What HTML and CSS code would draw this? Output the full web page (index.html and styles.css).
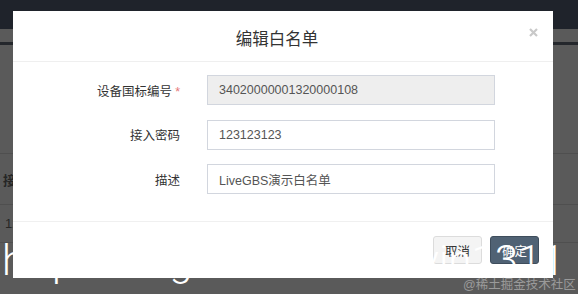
FILE: index.html
```html
<!DOCTYPE html>
<html lang="zh">
<head>
<meta charset="utf-8">
<title>编辑白名单</title>
<link rel="stylesheet" href="styles.css">
</head>
<body>
<div class="page">
  <div class="topbar"></div>
  <div class="subbar"></div>
  <div class="subline"></div>
  <div class="spacer"></div>
  <div class="trow thead"><span>接入密码</span></div>
  <div class="trow tdata"><span>123123123</span></div>
</div>

<div class="modal">
  <div class="modal-header">
    <h4 class="modal-title">编辑白名单</h4>
    <span class="close"><svg width="9" height="9" viewBox="0 0 9 9"><path d="M1 1 L8 8 M8 1 L1 8" stroke="#c9c9c9" stroke-width="2.2" stroke-linecap="butt"/></svg></span>
  </div>
  <div class="modal-body">
    <div class="form-row">
      <label class="form-label">设备国标编号<span class="req">*</span></label>
      <div class="form-input disabled">34020000001320000108</div>
    </div>
    <div class="form-row">
      <label class="form-label">接入密码</label>
      <div class="form-input">123123123</div>
    </div>
    <div class="form-row last">
      <label class="form-label">描述</label>
      <div class="form-input">LiveGBS演示白名单</div>
    </div>
  </div>
  <div class="modal-footer">
    <button class="btn btn-default">取消</button>
    <button class="btn btn-primary">确定</button>
  </div>
</div>

<div class="wm-big">http://blog.csdn.net/kevin1311</div>
<div class="wm-small">@稀土掘金技术社区</div>
</body>
</html>
```
FILE: styles.css
```css
html, body {
  margin: 0;
  padding: 0;
}
body {
  width: 578px;
  height: 294px;
  overflow: hidden;
  background: #5a5a5a;
  font-family: "Liberation Sans", "Noto Sans CJK SC", sans-serif;
  position: relative;
}
.page {
  display: flex;
  flex-direction: column;
}
.topbar {
  height: 29px;
  background: #1f232b;
}
.subbar {
  height: 13px;
  background: #5a5a5a;
}
.subline {
  height: 3px;
  background: #24272c;
}
.spacer {
  height: 108px;
}
.trow {
  display: flex;
  align-items: center;
  border-top: 1px solid #4f4f4f;
  padding-left: 3px;
  color: #262626;
  font-size: 13px;
}
.thead {
  height: 50px;
  font-weight: bold;
}
.tdata {
  height: 37px;
  border-bottom: 1px solid #4f4f4f;
  padding-left: 5px;
}

.modal {
  position: absolute;
  left: 13px;
  top: 11px;
  width: 540px;
  height: 267px;
  background: #fff;
  display: flex;
  flex-direction: column;
}
.modal-header {
  height: 50px;
  border-bottom: 1px solid #efefef;
  display: flex;
  align-items: center;
  justify-content: center;
  position: relative;
}
.modal-title {
  margin: 0;
  font-weight: normal;
  font-size: 16.5px;
  color: #333;
  padding-top: 3px;
  margin-right: 12px;
}
.close {
  position: absolute;
  right: 15px;
  top: 17px;
  width: 9px;
  height: 9px;
  display: flex;
}
.modal-body {
  padding: 13px 0 27px 0;
  display: flex;
  flex-direction: column;
  gap: 14.5px;
}
.form-row {
  display: grid;
  grid-template-columns: 167px 288px;
  column-gap: 27px;
  align-items: center;
}
.form-label {
  text-align: right;
  font-size: 12.5px;
  color: #333;
}
.req {
  color: #e5777a;
  margin-left: 3px;
}
.form-input {
  height: 30px;
  box-sizing: border-box;
  border: 1px solid #d2d6de;
  padding: 0 11px;
  display: flex;
  align-items: center;
  font-size: 12.5px;
  color: #555;
}
.form-input.disabled {
  background: #eee;
}
.modal-footer {
  border-top: 1px solid #f0f0f0;
  flex: 1;
  display: flex;
  justify-content: flex-end;
  align-items: flex-start;
  gap: 8px;
  padding: 14px 14px 0 0;
}
.btn {
  height: 28px;
  box-sizing: border-box;
  border-radius: 3px;
  font-family: inherit;
  font-size: 12.5px;
  padding: 0 11px;
  margin: 0;
}
.btn-default {
  background: #f4f4f4;
  border: 1px solid #dcdcdc;
  color: #333;
}
.btn-primary {
  background: #506274;
  border: 1px solid #3e4d5c;
  color: #fff;
}

.wm-big {
  position: absolute;
  left: 2px;
  top: 240px;
  font-family: Roboto, sans-serif;
  font-weight: 300;
  font-size: 42px;
  line-height: 42px;
  color: #fff;
  white-space: nowrap;
}
.wm-small {
  position: absolute;
  left: 463px;
  top: 278px;
  font-size: 12.5px;
  line-height: 14px;
  color: #9a9a9a;
  white-space: nowrap;
}
```
